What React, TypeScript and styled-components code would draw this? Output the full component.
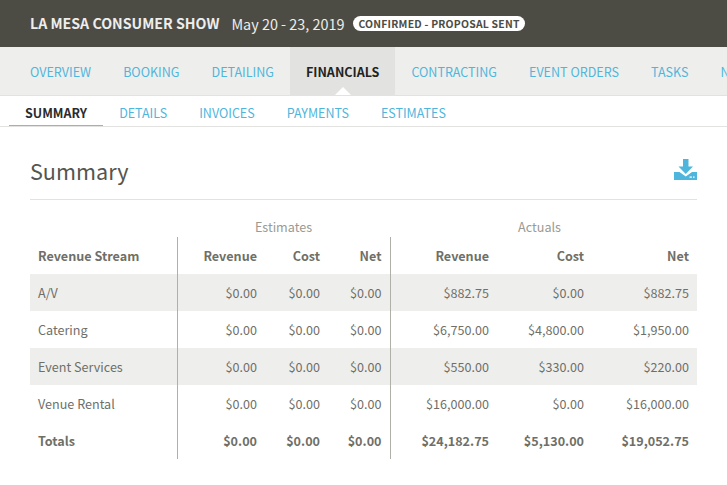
import styled, { createGlobalStyle } from "styled-components"

const colors = {
  dark: "#4c4c45",
  nav: "#eeeeec",
  active: "#e2e2e0",
  line: "#e2e2e0",
  blue: "#4eb6dc",
  text: "#6f6f68",
  muted: "#9a9a93",
  rule: "#b0b0a8",
  orange: "#e8a24f",
}

const GlobalStyle = createGlobalStyle`
  html, body {
    margin: 0;
    padding: 0;
    background: #fff;
    overflow: hidden;
  }
  body {
    font-family: "Noto Sans CJK SC", "Noto Sans", sans-serif;
  }
`

const Page = styled.div`
  width: 727px;
  height: 485px;
  overflow: hidden;
`
const TopBar = styled.header`
  height: 47px;
  background: ${colors.dark};
  display: flex;
  align-items: center;
  padding-left: 30px;
  color: #eeeeec;
  white-space: nowrap;
`
const ShowName = styled.div`
  font-size: 14.2px;
  line-height: 47px;
  font-weight: 700;
`
const ShowDate = styled.div`
  font-size: 14.4px;
  line-height: 47px;
  margin-left: 12px;
`
const Status = styled.div`
  margin-left: 9px;
  height: 15px;
  line-height: 15px;
  border-radius: 8px;
  padding: 0 5px;
  background: #fff;
  color: ${colors.dark};
  font-size: 10.4px;
  font-weight: 700;
  letter-spacing: 0.22px;
`
const MainNav = styled.nav`
  height: 48px;
  background: ${colors.nav};
  border-bottom: 1px solid ${colors.line};
  display: flex;
  padding-left: 14px;
  white-space: nowrap;
  overflow: hidden;
`
const MainTab = styled.div<{ $active?: boolean }>`
  position: relative;
  flex: none;
  height: 48px;
  padding: 0 16px;
  line-height: 50px;
  font-size: 12.55px;
  color: ${({ $active }) => ($active ? "#222" : colors.blue)};
  font-weight: ${({ $active }) => ($active ? 700 : 400)};
  background: ${({ $active }) => ($active ? colors.active : "transparent")};
  ${({ $active }) =>
    $active &&
    `&:after {
      content: "";
      position: absolute;
      left: 50%;
      bottom: 0;
      margin-left: -8px;
      border-left: 8px solid transparent;
      border-right: 8px solid transparent;
      border-bottom: 8px solid #fff;
    }`}
`
const SubNav = styled.nav`
  height: 30px;
  border-bottom: 1px solid ${colors.line};
  display: flex;
  padding-left: 9px;
  white-space: nowrap;
`
const SubTab = styled.div<{ $active?: boolean }>`
  flex: none;
  height: 30px;
  box-sizing: border-box;
  padding: 0 16px;
  line-height: 33px;
  font-size: 12.5px;
  color: ${({ $active }) => ($active ? "#2b2b2b" : colors.blue)};
  font-weight: ${({ $active }) => ($active ? 700 : 400)};
  border-bottom: ${({ $active }) => ($active ? `1px solid ${colors.orange}` : "none")};
`
const Content = styled.main`
  padding: 0 30px;
`
const TitleRow = styled.div`
  height: 73px;
  box-sizing: border-box;
  border-bottom: 1px solid ${colors.line};
  display: flex;
  align-items: center;
  justify-content: space-between;
  padding-top: 16px;
`
const Title = styled.h1`
  margin: 0;
  font-size: 21.6px;
  line-height: 30px;
  font-weight: 400;
  color: #55554f;
`
const DownloadIcon = styled.svg`
  display: block;
  width: 23px;
  height: 22px;
  margin-bottom: 3px;
  fill: ${colors.blue};
`
const Table = styled.table`
  width: 667px;
  margin-top: 17px;
  border-collapse: collapse;
  table-layout: fixed;
  font-size: 12.6px;
  color: ${colors.text};
`
const GroupHead = styled.th<{ $inset?: number }>`
  height: 20px;
  padding: 0 ${({ $inset }) => $inset || 0}px 0 0;
  font-size: 12.6px;
  line-height: 20px;
  font-weight: 400;
  color: ${colors.muted};
  text-align: center;
`
const HeadRow = styled.tr`
  height: 37px;
`
const Row = styled.tr<{ $shade?: boolean }>`
  height: 37px;
  background: ${({ $shade }) => ($shade ? colors.nav : "transparent")};
`
const Cell = styled.td<{ $bold?: boolean; $divider?: boolean; $label?: boolean }>`
  padding: 0 8px;
  line-height: 37px;
  white-space: nowrap;
  font-weight: ${({ $bold }) => ($bold ? 700 : 400)};
  text-align: ${({ $label }) => ($label ? "left" : "right")};
  border-left: ${({ $divider }) => ($divider ? `1px solid ${colors.rule}` : "none")};
`

const mainTabs = ["OVERVIEW", "BOOKING", "DETAILING", "FINANCIALS", "CONTRACTING", "EVENT ORDERS", "TASKS", "NOTES"]
const subTabs = ["SUMMARY", "DETAILS", "INVOICES", "PAYMENTS", "ESTIMATES"]
const rows = [
  ["A/V", "$0.00", "$0.00", "$0.00", "$882.75", "$0.00", "$882.75"],
  ["Catering", "$0.00", "$0.00", "$0.00", "$6,750.00", "$4,800.00", "$1,950.00"],
  ["Event Services", "$0.00", "$0.00", "$0.00", "$550.00", "$330.00", "$220.00"],
  ["Venue Rental", "$0.00", "$0.00", "$0.00", "$16,000.00", "$0.00", "$16,000.00"],
]
const totals = ["Totals", "$0.00", "$0.00", "$0.00", "$24,182.75", "$5,130.00", "$19,052.75"]
const heads = ["Revenue Stream", "Revenue", "Cost", "Net", "Revenue", "Cost", "Net"]
const colWidths = [147, 88, 63, 62, 107, 95, 105]

function Cells({ values, bold }: { values: string[]; bold?: boolean }) {
  return (
    <>
      {values.map((value, index) => (
        <Cell key={index} $bold={bold} $label={index == 0} $divider={index == 1 || index == 4}>
          {value}
        </Cell>
      ))}
    </>
  )
}

export default function App() {
  return (
    <Page>
      <GlobalStyle />
      <TopBar>
        <ShowName>LA MESA CONSUMER SHOW</ShowName>
        <ShowDate>May 20 - 23, 2019</ShowDate>
        <Status>CONFIRMED - PROPOSAL SENT</Status>
      </TopBar>
      <MainNav>
        {mainTabs.map((tab) => (
          <MainTab key={tab} $active={tab == "FINANCIALS"}>
            {tab}
          </MainTab>
        ))}
      </MainNav>
      <SubNav>
        {subTabs.map((tab) => (
          <SubTab key={tab} $active={tab == "SUMMARY"}>
            {tab}
          </SubTab>
        ))}
      </SubNav>
      <Content>
        <TitleRow>
          <Title>Summary</Title>
          <DownloadIcon viewBox="0 0 23 22">
            <path d="M9 0h5.500v7.500H19l-7.250 7.500L4.500 7.500H9z" />
            <path d="M0 13h5.500l6.250 4.500L18 13h5v8H0z" />
            <rect x="15.500" y="17.500" width="2.400" height="1.200" fill="#fff" />
            <rect x="19" y="17.500" width="1.600" height="1.200" fill="#fff" />
          </DownloadIcon>
        </TitleRow>
        <Table>
          <colgroup>
            {colWidths.map((width, index) => (
              <col key={index} style={{ width }} />
            ))}
          </colgroup>
          <thead>
            <tr>
              <th />
              <GroupHead colSpan={3}>Estimates</GroupHead>
              <GroupHead colSpan={3} $inset={8}>Actuals</GroupHead>
            </tr>
            <HeadRow>
              <Cells values={heads} bold />
            </HeadRow>
          </thead>
          <tbody>
            {rows.map((row, index) => (
              <Row key={row[0]} $shade={index % 2 == 0}>
                <Cells values={row} />
              </Row>
            ))}
            <Row>
              <Cells values={totals} bold />
            </Row>
          </tbody>
        </Table>
      </Content>
    </Page>
  )
}
